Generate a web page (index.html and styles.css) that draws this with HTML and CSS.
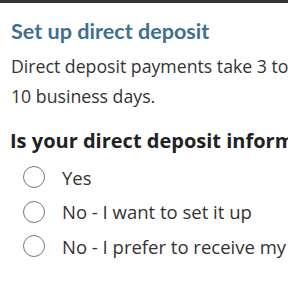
FILE: index.html
```html
<!DOCTYPE html>
<html lang="en">
<head>
    <meta charset="UTF-8">
    <meta name="viewport" content="width=device-width, initial-scale=1.0">
    <title>Set up direct deposit</title>
    <link rel="stylesheet" href="styles.css">
</head>
<body>
    <div class="topbar"></div>
    <main class="page">
        <h1>Set up direct deposit</h1>
        <p class="intro">Direct deposit payments take 3 to 10 business days.</p>

        <fieldset class="question">
            <legend>Is your direct deposit information correct?</legend>
            <label class="option">
                <input type="radio" name="dd">
                <span class="circle"></span>
                <span>Yes</span>
            </label>
            <label class="option">
                <input type="radio" name="dd">
                <span class="circle"></span>
                <span>No - I want to set it up</span>
            </label>
            <label class="option">
                <input type="radio" name="dd">
                <span class="circle"></span>
                <span>No - I prefer to receive my payments by check</span>
            </label>
        </fieldset>
    </main>
</body>
</html>
```

FILE: styles.css
```css
body {
    margin: 0;
    font-family: "Open Sans", Arial, sans-serif;
    color: #333;
    background: #fff;
    overflow: hidden;
}
.topbar {
    height: 3px;
    background-color: #333;
}
.page {
    padding: 0 0 0 11px;
    width: 420px;
}
h1 {
    font-family: Lato, Arial, sans-serif;
    font-weight: 700;
    font-size: 21.6px;
    color: #3e7090;
    margin: 14px 0 0;
    line-height: 28px;
}
.intro {
    width: 300px;
    font-size: 17.7px;
    line-height: 30px;
    margin: 6px 0 0;
}
.question {
    border: none;
    margin: 16px 0 0;
    padding: 0;
}
legend {
    padding: 0;
    margin-left: -1px;
    font-weight: 700;
    font-size: 20px;
    color: #222;
    white-space: nowrap;
    line-height: 28px;
}
.option {
    display: flex;
    align-items: center;
    gap: 17px;
    height: 34.5px;
    padding-left: 12px;
    font-size: 18.5px;
    white-space: nowrap;
}
.option:first-of-type {
    margin-top: 5px;
}
.option input {
    display: none;
}
.circle {
    width: 20px;
    height: 20px;
    border: 1.6px solid #777;
    border-radius: 50%;
    flex: none;
}
```
